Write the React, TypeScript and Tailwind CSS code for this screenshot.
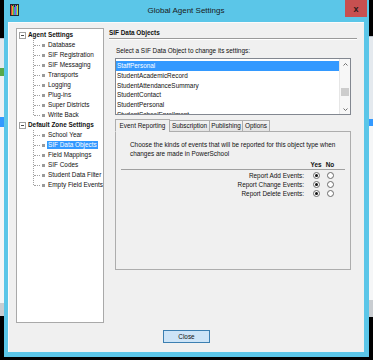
import React from 'react';

const agentItems = ['Database', 'SIF Registration', 'SIF Messaging', 'Transports', 'Logging', 'Plug-ins', 'Super Districts', 'Write Back'];
const zoneItems = ['School Year', 'SIF Data Objects', 'Field Mappings', 'SIF Codes', 'Student Data Filter', 'Empty Field Events'];
const sifObjects = ['StaffPersonal', 'StudentAcademicRecord', 'StudentAttendanceSummary', 'StudentContact', 'StudentPersonal', 'StudentSchoolEnrollment'];
const events = ['Report Add Events:', 'Report Change Events:', 'Report Delete Events:'];
const tabs = [
  { label: 'Event Reporting', w: 'w-[55px]' },
  { label: 'Subscription', w: 'w-[41px]' },
  { label: 'Publishing', w: 'w-[34px]' },
  { label: 'Options', w: 'w-[28px]' },
];

function Expander() {
  return (
    <span className="w-[7px] h-[7px] border border-[#a0a0a0] bg-white flex items-center justify-center shrink-0">
      <span className="w-[3px] h-px bg-[#4a4a4a]" />
    </span>
  );
}

function TreeGroup({ label, items, selected }: { label: string; items: string[]; selected?: string }) {
  return (
    <div>
      <div className="h-[10px] flex items-center pl-[2px]">
        <Expander />
        <span className="ml-[2px] font-bold text-[#111]">{label}</span>
      </div>
      <div className="relative">
        {/* connector line */}
        <div className="absolute left-[16px] top-0 bottom-[5px] border-l border-dotted border-[#a0a0a0]" />
        {items.map((item) => (
          <div key={item} className="h-[10px] flex items-center pl-[17px]">
            <span className="w-[6px] shrink-0 border-t border-dotted border-[#a0a0a0]" />
            <span className="ml-[2px] w-[3px] h-[3px] shrink-0 bg-[#9a9a9a]" />
            <span
              className={
                'ml-[2px] px-px leading-[8px] shrink-0 ' +
                (item === selected ? 'bg-[#3399ff] text-white' : 'text-[#111]')
              }
            >
              {item}
            </span>
          </div>
        ))}
      </div>
    </div>
  );
}

function Radio({ checked }: { checked?: boolean }) {
  return (
    <span className="w-[7px] h-[7px] rounded-full border border-[#6b6b6b] bg-white flex items-center justify-center">
      {checked && <span className="w-[3px] h-[3px] rounded-full bg-[#111]" />}
    </span>
  );
}

function AppIcon() {
  return (
    <svg width="9" height="12" viewBox="0 0 9 12">
      <rect width="9" height="12" fill="#1d2a33" />
      <rect x="1" y="1" width="1" height="10" fill="#d8453a" />
      <rect x="2" y="2" width="1" height="9" fill="#e8a13a" />
      <rect x="3" y="1" width="1" height="10" fill="#5bb04a" />
      <rect x="4" y="3" width="1" height="8" fill="#3a8fd8" />
      <rect x="5" y="1" width="1" height="10" fill="#9a4ad0" />
      <rect x="6" y="2" width="1" height="9" fill="#3ac0c8" />
      <rect x="7" y="1" width="1" height="10" fill="#d8c83a" />
    </svg>
  );
}

export default function App() {
  return (
    <div
      className="w-[373px] h-[360px] bg-black flex overflow-hidden whitespace-nowrap text-[6.4px] leading-[10px]"
      style={{ fontFamily: '"Liberation Sans", Arial, sans-serif' }}
    >
      {/* Background app peeking out on the left */}
      <div className="w-[4px] flex flex-col">
        <div className="h-[38px] bg-black" />
        <div className="h-[30px] bg-[#e4e9ee] border-t border-[#b9c2cc]" />
        <div className="h-[8px] bg-[#57a84a]" />
        <div className="h-[41px] bg-[#eef1f4]" />
        <div className="h-[10px] bg-[#3399ff]" />
        <div className="h-[176px] bg-[#f5f6f7]" />
        <div className="h-[13px] bg-[#c9cdd1]" />
        <div className="flex-1 bg-black" />
      </div>

      {/* Dialog window */}
      <div className="w-[365px] h-[357px] bg-[#5bc6e8] flex flex-col">
        <div className="h-[22px] flex items-start shrink-0">
          <div className="pl-[6px] pt-[4px]">
            <AppIcon />
          </div>
          <div className="flex-1 h-[22px] flex items-center justify-center text-[8px] text-[#1a1a1a] pl-[8px]">
            Global Agent Settings
          </div>
          <div className="w-[22px] h-[17px] bg-[#c75050] flex items-center justify-center text-[9px] font-bold text-[#2a1a1a] mr-[2px]">
            x
          </div>
        </div>

        <div className="mx-[4px] w-[356px] h-[330px] bg-[#f0f0f0] border-l border-t border-[#fbfbfb] flex flex-col">
          <div className="flex pt-[5px] pl-[7px]">
            {/* Tree */}
            <div className="w-[88px] h-[295px] shrink-0 bg-white border border-[#a9a9a9] pt-px overflow-hidden">
              <TreeGroup label="Agent Settings" items={agentItems} />
              <TreeGroup label="Default Zone Settings" items={zoneItems} selected="SIF Data Objects" />
            </div>

            {/* Right panel */}
            <div className="ml-[5px] w-[248px] flex flex-col">
              <div className="h-[10px] font-bold text-[#111] leading-[10px]">SIF Data Objects</div>
              <div className="h-[2px] border-t border-[#9a9a9a] border-b border-b-white" />
              <div className="mt-[6px] h-[10px] pl-[7px] text-[#111]">Select a SIF Data Object to change its settings:</div>

              <div className="mt-[2px] ml-[6px] w-[236px] h-[57px] bg-white border border-[#828790] flex">
                <div className="flex-1 overflow-hidden pt-[2px]">
                  {sifObjects.map((o, i) => (
                    <div
                      key={o}
                      className={
                        'h-[9.8px] leading-[9px] pl-px ' + (i === 0 ? 'bg-[#3399ff] text-white' : 'text-[#111]')
                      }
                    >
                      {o}
                    </div>
                  ))}
                </div>
                <div className="w-[11px] border-l border-[#e6e6e6] bg-[#f7f7f7] flex flex-col items-center text-[#606060]">
                  <div className="h-[10px] flex items-center justify-center">
                    <svg width="5" height="3" viewBox="0 0 5 3"><path d="M0.5 2.5 L2.5 0.5 L4.5 2.5" fill="none" stroke="#606060" strokeWidth="0.9" /></svg>
                  </div>
                  <div className="flex-1 w-full flex flex-col">
                    <div className="h-[19px]" />
                    <div className="h-[8px] mx-[1px] bg-[#cdcdcd]" />
                  </div>
                  <div className="h-[10px] flex items-center justify-center">
                    <svg width="5" height="3" viewBox="0 0 5 3"><path d="M0.5 0.5 L2.5 2.5 L4.5 0.5" fill="none" stroke="#606060" strokeWidth="0.9" /></svg>
                  </div>
                </div>
              </div>

              {/* Tabs */}
              <div className="mt-[4px] ml-[6px] flex items-end h-[13px] relative z-10">
                {tabs.map((t, i) => (
                  <div
                    key={t.label}
                    className={
                      t.w +
                      ' flex items-center justify-center border border-[#adadad] text-[#111] ' +
                      (i === 0
                        ? 'h-[13px] bg-[#f0f0f0] border-b-[#f0f0f0]'
                        : 'h-[12px] -ml-px bg-gradient-to-b from-[#f4f4f4] to-[#e3e3e3] border-b-[#adadad]')
                    }
                  >
                    {t.label}
                  </div>
                ))}
              </div>
              <div className="-mt-px ml-[6px] w-[236px] h-[139px] border border-[#adadad] bg-[#f0f0f0] flex flex-col">
                <div className="pt-[8px] pl-[14px] leading-[9px] text-[#111]">
                  <div>Choose the kinds of events that will be reported for this object type when</div>
                  <div>changes are made in PowerSchool</div>
                </div>
                <div className="mt-[3px] mx-[5px] h-[9px] flex items-end border-b border-[#a0a0a0]">
                  <div className="w-[183px]" />
                  <div className="ml-[5px] w-[14px] text-center font-bold leading-[8px] text-[#111]">Yes</div>
                  <div className="w-[14px] text-center font-bold leading-[8px] text-[#111]">No</div>
                </div>
                <div className="mt-[1px]">
                  {events.map((e) => (
                    <div key={e} className="h-[9px] flex items-center">
                      <div className="w-[188px] text-right text-[#111]">{e}</div>
                      <div className="ml-[5px] w-[14px] flex justify-center">
                        <Radio checked />
                      </div>
                      <div className="w-[14px] flex justify-center">
                        <Radio />
                      </div>
                    </div>
                  ))}
                </div>
              </div>
            </div>
          </div>

          <div className="mt-[7px] flex justify-center">
            <button className="w-[47px] h-[13px] bg-[#cde4f7] border border-[#3c7fb1] text-[#111] flex items-center justify-center">
              Close
            </button>
          </div>
        </div>
      </div>

      {/* Background app on the right */}
      <div className="w-[4px] flex flex-col">
        <div className="h-[36px] bg-black" />
        <div className="h-[83px] bg-[#e4e9ee] border-t border-[#b9c2cc]" />
        <div className="h-[7px] bg-[#3399ff]" />
        <div className="h-[174px] bg-[#f5f6f7]" />
        <div className="h-[17px] bg-[#c9cdd1]" />
        <div className="flex-1 bg-black" />
      </div>
    </div>
  );
}
